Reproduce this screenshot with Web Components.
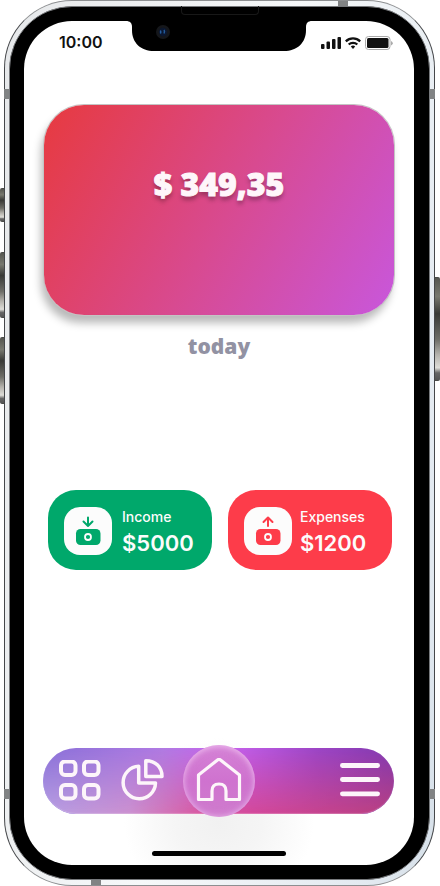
<!DOCTYPE html>
<html lang="en">
<head>
<meta charset="utf-8">
<meta name="viewport" content="width=device-width, initial-scale=1">
<title>Wallet</title>
<style>
  body { margin: 0; background: #fff; font-family: Inter, "Liberation Sans", sans-serif; color: #111; }
</style>
</head>
<body>
<phone-frame>
  <status-bar time="10:00"></status-bar>
  <balance-card amount="$ 349,35" period="today"></balance-card>
  <summary-row>
    <money-tile kind="income" label="Income" amount="$5000"></money-tile>
    <money-tile kind="expenses" label="Expenses" amount="$1200"></money-tile>
  </summary-row>
  <tab-bar></tab-bar>
</phone-frame>

<script>
class Base extends HTMLElement {
  connectedCallback() {
    if (!this.shadowRoot) this.attachShadow({ mode: "open" }).innerHTML =
      "<style>*{box-sizing:border-box}</style>" + this.view();
  }
}

customElements.define("phone-frame", class extends Base {
  view() { return `
<style>
  :host { display: grid; position: relative; min-height: 100vh; padding: 0 5px 0 4px; box-sizing: border-box; }
  .rim { display: grid; position: relative; padding: 5px 4px; border: 1px solid #45474a; border-top-color: #8d8f91; border-bottom-color: #8d8f91; border-radius: 68px;
    background: linear-gradient(100deg, #e6e8ea, #f6f8f9 50%, #e2e9f0 90%, #d5dfe8); }
  .bezel { display: grid; padding: 14px 15px 14px 14px; border: 1px solid #77797c; border-radius: 63px; background: #000; }
  .screen { display: flex; flex-direction: column; padding: 0 20px; border-radius: 48px; background: radial-gradient(ellipse 95px 85px at 50% 95%, #f1f1f1, #f5f5f5 45%, #fff); }
  .home { align-self: center; width: 134px; height: 5px; margin: 37px 0 9px; border-radius: 3px; background: #000; }
  i { position: absolute; background: #818384; }
  .key { background: linear-gradient(#555650, #77786f 18%, #383936 35%, #6d6d67 60%, #b3b1ab 75%, #deddd8 88%, #666 93%, #555); border: 1px solid #4a4b48; border-width: 1px 0 1px 0; width: 4px; left: 0; border-radius: 2px 0 0 2px; }
  .notch { position: absolute; top: 21px; left: 50%; width: 186px; margin-left: -94px; height: 31px; }
  .speaker { position: absolute; top: 6px; left: 50%; width: 78px; height: 9px; margin-left: -39px; border: 1px solid #181818; border-top: 0; border-radius: 0 0 4px 4px; }
  .wrap { display: grid; position: relative; }
</style>
<i class="key" style="top:188px;height:34px"></i>
<i class="key" style="top:252px;height:66px"></i>
<i class="key" style="top:337px;height:67px"></i>
<i class="key" style="top:277px;height:104px;left:auto;right:0;width:5px;border-radius:0 2px 2px 0"></i>
<div class="wrap">
<div class="rim">
  <i style="left:-1px;top:88px;width:5px;height:10px"></i>
  <i style="right:-1px;top:88px;width:5px;height:10px"></i>
  <i style="left:-1px;bottom:86px;width:5px;height:10px"></i>
  <i style="right:-1px;bottom:86px;width:5px;height:10px"></i>
  <i style="right:86px;top:0;width:10px;height:5px"></i>
  <i style="left:86px;bottom:0;width:10px;height:5px"></i>
  <div class="bezel"><div class="screen"><slot></slot><div class="home"></div></div></div>
</div>
<div class="speaker"></div>
<svg class="notch" viewBox="0 0 186 31" aria-hidden="true">
  <path d="M0 0H186C182 0 180 2 180 6V9C180 22 171 30 158 30H28C15 30 6 22 6 9V6C6 2 4 0 0 0Z" fill="#000"/>
  <circle cx="37" cy="11" r="7" fill="#15171b"/><circle cx="37" cy="11" r="4.2" fill="#0b1730"/>
  <path d="M35 9.500q-1 1.500 0 3M38 9q1 1.500 0 3.500" stroke="#245c9c" stroke-width="1.500" fill="none"/>
</svg>
</div>`; }
});

customElements.define("status-bar", class extends Base {
  view() { return `
<style>
  :host { display: flex; justify-content: space-between; align-items: center; height: 20px; margin: 11px 1px 53px 15px; font-size: 16px; line-height: 20px; font-weight: 600; }
  svg { display: block; }
  time { padding-bottom: 1px; }
</style>
<time>${this.getAttribute("time")}</time>
<svg width="73" height="16" viewBox="0 0 73 16" role="img" aria-label="Signal, Wi-Fi, battery">
  <g fill="#111"><rect x="1" y="10" width="3.500" height="5" rx="1"/><rect x="6.500" y="7.500" width="3.500" height="7.500" rx="1"/><rect x="12" y="5" width="3.500" height="10" rx="1"/><rect x="17.500" y="3" width="3.500" height="12" rx="1"/></g>
  <g fill="none" stroke="#111" stroke-width="2.300"><path d="M25.800 7.300a10.500 10.500 0 0 1 14.400 0"/><path d="M28.700 10.500a6.300 6.300 0 0 1 8.600 0"/></g>
  <path d="M30.800 12.500a3.400 3.400 0 0 1 4.400 0L33 15Z" fill="#111"/>
  <rect x="45.500" y="2.500" width="24.500" height="13" rx="3" fill="none" stroke="#aaa"/>
  <rect x="47" y="4" width="21.500" height="10" rx="1.500" fill="#111"/><path d="M71 7v4.500q1.800-.6 1.800-2.200T71 7Z" fill="#aaa"/>
</svg>`; }
});

customElements.define("balance-card", class extends Base {
  view() { return `
<style>
  :host { display: block; text-align: center; font-family: "Open Sans", "Noto Sans", sans-serif; font-weight: 800; }
  .card { height: 210px; padding-top: 59px; border-radius: 40px; background: linear-gradient(120deg, #e73a3f, #d84a90 52%, #c857dc);
    box-shadow: 0 0 0 1px #c4c4c4, -3px 8px 8px rgba(0,0,0,.28); }
  .sum { font-size: 32px; line-height: 40px; color: #fef6fa; -webkit-text-stroke: 1px #fef6fa; text-shadow: 0 4px 4px rgba(0,0,0,.3); }
  .period { margin: 15px 0 0; font-size: 21px; line-height: 32px; color: #9292a3; }
</style>
<div class="card"><div class="sum">${this.getAttribute("amount")}</div></div>
<p class="period">${this.getAttribute("period")}</p>`; }
});

customElements.define("summary-row", class extends Base {
  view() { return `
<style>:host { display: grid; grid-template-columns: 1fr 1fr; gap: 16px; margin: 128px 2px 0 4px; }</style><slot></slot>`; }
});

customElements.define("money-tile", class extends Base {
  view() {
    const out = this.getAttribute("kind") === "expenses";
    const c = out ? "#fd3c4a" : "#00a86b";
    const arrow = out ? "M24 19V11M19.500 15L24 10.500l4.500 4.500" : "M24 10.500V19M19.500 14.500L24 19l4.500-4.500";
    return `
<style>
  :host { display: flex; align-items: center; gap: ${out ? 8 : 10}px; height: 80px; padding: 2px 0 0 16px; box-sizing: border-box; border-radius: 28px; background: ${c}; color: #fcfcfc; }
  svg { flex: none; width: 48px; height: 48px; border-radius: 16px; background: #fcfcfc; }
  .label { font-size: 14px; line-height: 18px; font-weight: 500; }
  .amount { font-size: 22px; line-height: 28px; font-weight: 600; margin-top: 3px; }
  .text { padding-top: 2px; }
</style>
<svg viewBox="0 0 48 48" aria-hidden="true">
  <rect x="12" y="22" width="24.500" height="16" rx="4.500" fill="${c}"/>
  <circle cx="24" cy="30" r="3" fill="none" stroke="#fcfcfc" stroke-width="1.800"/>
  <path d="${arrow}" fill="none" stroke="${c}" stroke-width="2" stroke-linecap="round" stroke-linejoin="round"/>
</svg>
<div class="text"><div class="label">${this.getAttribute("label")}</div><div class="amount">${this.getAttribute("amount")}</div></div>`;
  }
});

customElements.define("tab-bar", class extends Base {
  view() { return `
<style>
  :host { display: block; margin: auto 0 0 -1px; }
  nav { position: relative; display: flex; align-items: center; height: 66px; padding: 0 14px 0 16px; border-radius: 33px;
    background: linear-gradient(to right, #8970d8, #b07ae3 34%, #c862ee 52%, #9c45c6 78%, #8239b0); }
  nav::before { content: ""; position: absolute; inset: 0; border-radius: 33px; box-shadow: inset 0 1px 1px rgba(255,255,255,.35), inset 0 -1px 1px rgba(255,255,255,.25);
    background: linear-gradient(to right, #b8a0e3, #cc90cf 25%, #d8589f 45%, #d34899 60%, #b83f80);
    -webkit-mask-image: linear-gradient(transparent, #000); mask-image: linear-gradient(transparent, #000); }
  button { position: relative; flex: none; display: grid; place-items: center; padding: 0; border: 0; background: none; }
  svg { display: block; fill: none; stroke: #fdf5fa; stroke-linejoin: round; stroke-linecap: round; }
  .stats { margin-left: 20px; }
  .home { width: 72px; height: 72px; margin-left: 18px; border-radius: 50%; background: linear-gradient(#d583d6, #cf72cf 50%, #cf7ccd);
    box-shadow: inset 0 1px 5px 1px rgba(255,225,255,.35), inset 0 0 9px rgba(240,190,245,.5); }
  .menu { margin-left: auto; }
</style>
<nav aria-label="Main">
  <button type="button" aria-label="Dashboard"><svg width="42" height="42" viewBox="0 0 42 42" stroke-width="4"><rect x="2" y="1.500" width="14.500" height="13.500" rx="4"/><rect x="25" y="1.500" width="14.500" height="13.500" rx="4"/><rect x="2" y="25" width="14.500" height="13.500" rx="4"/><rect x="25" y="25" width="14.500" height="13.500" rx="4"/></svg></button>
  <button type="button" class="stats" aria-label="Statistics"><svg width="44" height="44" viewBox="0 0 44 44" stroke-width="3.500"><path d="M17.700 7.300A16.200 16.200 0 1 0 34.500 24H17.700Z"/><path d="M24.800 1.800V17.500H41C41 8 34.500 1.800 24.800 1.800Z"/></svg></button>
  <button type="button" class="home" aria-label="Home"><svg width="46" height="46" viewBox="0 0 46 46" stroke-width="3.200"><path d="M2.500 18 21.500 3Q23 1.900 24.500 3L43.500 18V42.500H30V34Q30 27 23 27T16 34V42.500H2.500Z" transform="translate(0 -1)"/></svg></button>
  <button type="button" class="menu" aria-label="Menu"><svg width="40" height="36" viewBox="0 0 40 36" stroke-width="4.800"><path d="M2.400 2.500H37.600M2.400 16.500H37.600M2.400 30.800H37.600"/></svg></button>
</nav>`; }
});
</script>
</body>
</html>
